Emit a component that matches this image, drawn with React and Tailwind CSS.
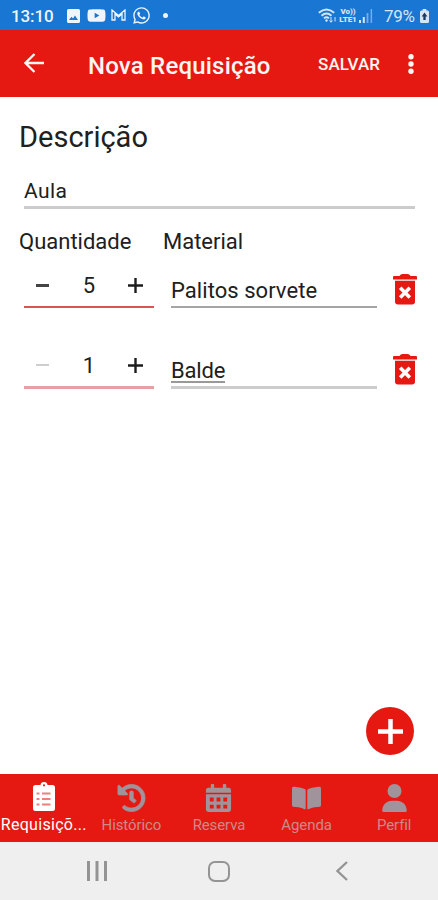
import React from "react";
import { FaBookOpen, FaHistory, FaWhatsapp, FaYoutube } from "react-icons/fa";
import { FaUser } from "react-icons/fa6";

function StatusBar() {
  return (
    <div className="flex h-[30px] shrink-0 items-center bg-[#1976d2] pl-[11px] text-[#eef5fc]">
      <span className="mt-[1px] w-[43px] whitespace-nowrap text-[17px] font-medium leading-[30px] tracking-[-0.1px]">13:10</span>
      <svg className="ml-[13px] mt-px" width="13" height="14" viewBox="0 0 13 14">
        <path fill="currentColor" fillRule="evenodd" d="M1.5 0h10A1.5 1.5 0 0 1 13 1.5v11a1.5 1.5 0 0 1-1.5 1.5h-10A1.5 1.5 0 0 1 0 12.500v-11A1.500 1.500 0 0 1 1.500 0ZM2 11h9L8 6.500l-2 3-1.500-1.700Z" />
      </svg>
      <FaYoutube className="ml-[7px] h-[19px] w-[19px]" />
      <svg className="ml-[5px] mt-[-1px]" width="15" height="12" viewBox="0 0 15 12" fill="none" stroke="currentColor">
        <path strokeWidth="1.300" d="M1 11V1l6.500 5.500L14 1v10h-3V5L7.500 8 4 5v6Z" />
      </svg>
      <FaWhatsapp className="ml-[6px] h-[19px] w-[19px]" />
      <span className="ml-[12px] mt-px h-[5px] w-[5px] rounded-full bg-[#eef5fc]" />
      <div className="ml-auto flex items-center pr-[9px] text-[#d5e5f4]">
        <svg className="mt-px" width="19" height="16" viewBox="0 0 19 16" fill="none" stroke="currentColor" strokeWidth="1.900">
          <path d="M.8 4.800Q8.500-1.800 16.200 4.800M3.500 7.700q5-4.200 10 0M6 10.400q2.500-2.200 5 0" />
          <circle cx="8.500" cy="12.500" r="1.200" fill="currentColor" stroke="none" />
          <path strokeWidth="1" d="M13 9v5m-1.500-1.500 1.500 1.800 1.500-1.800M17 13.500V9" />
        </svg>
        <div className="ml-[1px] mt-px flex w-[20px] flex-col items-center text-[8px] font-black leading-[8px] tracking-[-0.100px]">
          <span>Vo))</span>
          <span>LTE1</span>
        </div>
        <svg className="ml-[1px] mt-px" width="14" height="14" viewBox="0 0 14 14" fill="currentColor">
          <path d="M0 11h2v3H0ZM3.800 8h2v6h-2Z" />
          <path opacity=".5" d="M7.600 4h1.800v10H7.600ZM11.600 0h1.500v14h-1.500Z" />
        </svg>
        <span className="ml-[11px] mt-[1px] w-[34px] whitespace-nowrap text-[17px] leading-[30px] tracking-[-0.300px]">79%</span>
        <svg className="ml-[2px] mt-px" width="9" height="14" viewBox="0 0 10 14" preserveAspectRatio="none">
          <path fill="currentColor" d="M3 0h4v1.500h1.500Q10 1.500 10 3v9.500Q10 14 8.500 14h-7Q0 14 0 12.500V3q0-1.500 1.500-1.500H3Z" />
          <path fill="#183c61" d="M5 3.500 1.800 7.500h1.900V11h2.600V7.500h1.900Z" />
        </svg>
      </div>
    </div>
  );
}

function Header() {
  return (
    <header className="flex h-[67px] shrink-0 items-center bg-[#e51912] text-[#fff5f3]">
      <svg className="-mt-[1px] ml-[24px] shrink-0" width="20" height="20" viewBox="0 0 20 20" fill="none" stroke="currentColor" strokeWidth="2.300">
        <path d="M20 10H2M10.500 1 1.500 10l9 9" />
      </svg>
      <h1 className="ml-[44px] mt-[4px] w-[230px] whitespace-nowrap text-[24px] font-medium tracking-[0.200px]">Nova Requisição</h1>
      <span className="mt-[2px] w-[64px] whitespace-nowrap text-[17px] font-medium tracking-[0.100px]">SALVAR</span>
      <svg className="ml-[26px]" width="6" height="20" viewBox="0 0 6 20" fill="currentColor">
        <circle cx="3" cy="2.800" r="2.700" />
        <circle cx="3" cy="10" r="2.700" />
        <circle cx="3" cy="17.200" r="2.700" />
      </svg>
    </header>
  );
}

function TrashIcon() {
  return (
    <svg className="ml-[16px] mt-[4px] shrink-0" width="24" height="31" viewBox="0 0 24 31">
      <path fill="#e51912" d="M1 2h5.500q1-2 3-2h5q2 0 3 2H23q1 0 1 1v2.600H0V3q0-1 1-1ZM2 6.800h20v20.700q0 3-3 3H5q-3 0-3-3Z" />
      <path fill="none" stroke="#fff" strokeWidth="3.600" d="m7.200 13.800 9.600 9.600m0-9.600-9.600 9.600" />
    </svg>
  );
}

function ItemRow({ quantity, material, disabled }) {
  return (
    <div className="flex h-[80px] items-start pl-[24px]">
      <div className={`flex w-[130px] items-start ${disabled ? "h-[39px] border-b-[3px] border-[#e5a0a2]" : "h-[38px] border-b-2 border-[#dc5356]"}`}>
        <button className="flex h-[30px] w-[36px] items-center justify-center" aria-label="Diminuir">
          <span className={disabled ? "h-[2px] w-[13px] bg-[#cecece]" : "h-[3px] w-[13px] bg-[#444]"} />
        </button>
        <span className="h-[30px] w-[58px] text-center text-[22px] leading-[32px]">{quantity}</span>
        <button className="flex h-[30px] w-[35px] items-center justify-center" aria-label="Aumentar">
          <svg width="15" height="15" viewBox="0 0 15 15" stroke="#1d1d1d" strokeWidth="2.400"><path d="M7.500 0v15M0 7.500h15" /></svg>
        </button>
      </div>
      <div className={`ml-[17px] w-[206px] ${disabled ? "h-[39px] border-b-[3px] border-[#ccc]" : "h-[38px] border-b-2 border-[#a5a5a5]"}`}>
        <div className="pt-[7px] text-[22px] leading-[28px] tracking-[0.050px]">
          <span className={disabled ? "inline-block h-[26px] border-b-2 border-[#999] leading-[28px] tracking-[-0.200px]" : ""}>{material}</span>
        </div>
      </div>
      <TrashIcon />
    </div>
  );
}

function ClipboardIcon({ className }) {
  return (
    <svg className={className} viewBox="0 0 30 29">
      <path fill="currentColor" d="M6.500 3h5q.3-3 3.500-3t3.500 3h5Q26 3 26 5.500v21q0 2.500-2.500 2.500h-17Q4 29 4 26.500v-21Q4 3 6.500 3Z" />
      <circle cx="15" cy="3.300" r="1.100" fill="#e51912" />
      <path fill="none" stroke="#ea807c" strokeWidth="2" d="M7.500 11.500h3M13 11.500h8.500M7.500 17h3M13 17h8.500M7.500 22.500h3M13 22.500h8.500" />
    </svg>
  );
}

function HistoryIcon({ className }) {
  return <FaHistory className={className} stroke="currentColor" strokeWidth="14" />;
}

function CalendarIcon({ className }) {
  return (
    <svg className={className} viewBox="0 0 29 29" fill="currentColor">
      <path d="M6.500 1q0-1 1-1H9q1 0 1 1v3h9V1q0-1 1-1h1.500q1 0 1 1v3H25q2.500 0 2.500 2.500V9h-26V6.500Q1.500 4 4 4h2.500Z" />
      <path fillRule="evenodd" d="M1.500 10.500h26v16Q27.500 29 25 29H4q-2.500 0-2.500-2.500ZM5.500 14v4h4v-4Zm7 0v4h4v-4Zm7 0v4h4v-4Zm-14 7.500v4h4v-4Zm7 0v4h4v-4Zm7 0v4h4v-4Z" />
    </svg>
  );
}

const tabs = [
  { label: "Requisiçõ...", Icon: ClipboardIcon, active: true },
  { label: "Histórico", Icon: HistoryIcon },
  { label: "Reserva", Icon: CalendarIcon },
  { label: "Agenda", Icon: FaBookOpen },
  { label: "Perfil", Icon: FaUser },
];

function TabBar() {
  return (
    <nav className="grid h-[68px] shrink-0 grid-cols-5 bg-[#e51912]">
      {tabs.map(({ label, Icon, active }) => (
        <div key={label} className={`flex flex-col items-center ${active ? "pt-[8px] text-white" : "pt-[10px] text-[#a0939b]"}`}>
          <Icon className={active ? "h-[29px] w-[30px] shrink-0" : "h-[28px] w-[29px] shrink-0"} />
          <span className={`whitespace-nowrap leading-[20px] ${active ? "mt-[4px] text-[16px] tracking-[0.300px]" : "mt-[3px] text-[15px] tracking-[-0.100px] text-[#cc8a8a]"}`}>{label}</span>
        </div>
      ))}
    </nav>
  );
}

function SystemNav() {
  return (
    <div className="flex h-[58px] shrink-0 items-center bg-[#efefef] pl-[87px]">
      <svg width="20" height="20" viewBox="0 0 20 20" fill="#949494"><path d="M0 0h3v20H0ZM8.500 0h3v20h-3ZM17 0h3v20h-3Z" /></svg>
      <span className="ml-[101px] h-[21px] w-[22px] rounded-[7px] border-[2.500px] border-[#949494]" />
      <svg className="ml-[106px]" width="12" height="20" viewBox="0 0 12 20" fill="none" stroke="#949494" strokeWidth="2.300"><path d="m11 1-9.500 9 9.500 9" /></svg>
    </div>
  );
}

export default function App() {
  return (
    <div className="flex h-[900px] w-[438px] flex-col overflow-hidden bg-white font-['Roboto',sans-serif] text-[#202020]">
      <StatusBar />
      <Header />
      <main className="flex min-h-0 flex-1 flex-col">
        <h2 className="ml-[19px] mt-[22px] h-[36px] whitespace-nowrap text-[29px] leading-[36px]">Descrição</h2>
        <div className="ml-[24px] mt-[18px] h-[36px] w-[391px] border-b-[3px] border-[#ccc] text-[21px] leading-[37px] tracking-[0.400px]">Aula</div>
        <div className="mt-[18px] flex h-[30px] pl-[19px] text-[22px] leading-[30px]">
          <span className="w-[144px]">Quantidade</span>
          <span>Material</span>
        </div>
        <div className="mt-[13px]">
          <ItemRow quantity="5" material="Palitos sorvete" />
          <ItemRow quantity="1" material="Balde" disabled />
        </div>
        <button className="mb-[19px] ml-auto mr-[24px] mt-auto flex h-[48px] w-[48px] items-center justify-center rounded-full bg-[#e51912]" aria-label="Adicionar">
          <svg width="25" height="25" viewBox="0 0 25 25" stroke="#fff" strokeWidth="4.500"><path d="M12.500 0v25M0 12.500h25" /></svg>
        </button>
      </main>
      <TabBar />
      <SystemNav />
    </div>
  );
}
